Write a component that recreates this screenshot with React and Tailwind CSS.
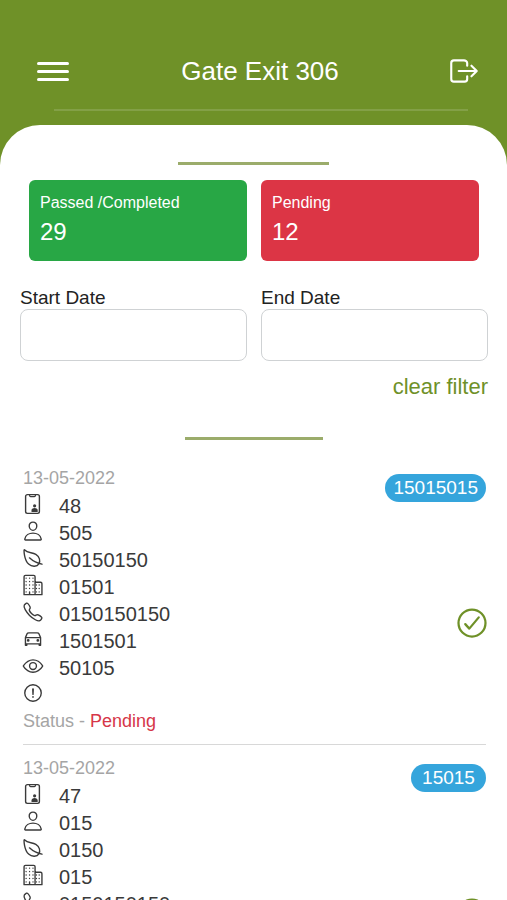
import React from "react";
import {
  IoAlertCircleOutline,
  IoBusinessOutline,
  IoCallOutline,
  IoCarOutline,
  IoCheckmarkCircleOutline,
  IoEyeOutline,
  IoLeafOutline,
  IoLogOutOutline,
  IoPersonOutline,
} from "react-icons/io5";

/* ── Gate passes, newest first ── */
const PASSES = [
  {
    date: "13-05-2022",
    tag: "15015015",
    status: "Pending",
    id: "48",
    person: "505",
    material: "50150150",
    company: "01501",
    phone: "0150150150",
    vehicle: "1501501",
    seenBy: "50105",
    note: "",
  },
  {
    date: "13-05-2022",
    tag: "15015",
    status: "Pending",
    id: "47",
    person: "015",
    material: "0150",
    company: "015",
    phone: "0150150150",
    vehicle: "1501501",
    seenBy: "50105",
    note: "",
  },
];

/* Phone outline with a small solid visitor in the corner */
function PassIcon({ className }) {
  return (
    <svg viewBox="0 0 22 22" className={className} fill="none" stroke="currentColor" aria-hidden="true">
      <rect x="3.6" y="1.6" width="13.8" height="18.8" rx="1.8" strokeWidth="1.4" />
      <path d="M7.6 2v0.6a1 1 0 0 0 1 1h3.8a1 1 0 0 0 1-1V2" strokeWidth="1.2" />
      <circle cx="12.6" cy="12.8" r="1.6" fill="currentColor" stroke="none" />
      <path d="M9.5 18.9v-1.4c0-1.7 1.3-2.6 3.1-2.6s3.1.9 3.1 2.6v1.4z" fill="currentColor" stroke="none" />
    </svg>
  );
}

const FIELDS = [
  { key: "id", Icon: PassIcon },
  { key: "person", Icon: IoPersonOutline },
  { key: "material", Icon: IoLeafOutline },
  { key: "company", Icon: IoBusinessOutline },
  { key: "phone", Icon: IoCallOutline },
  { key: "vehicle", Icon: IoCarOutline },
  { key: "seenBy", Icon: IoEyeOutline },
  { key: "note", Icon: IoAlertCircleOutline },
];

function StatCard({ label, value, className }) {
  return (
    <div className={`rounded-md px-[11px] pt-[11px] pb-3 text-white ${className}`}>
      <div className="text-base leading-6">{label}</div>
      <div className="text-2xl leading-[34px]">{value}</div>
    </div>
  );
}

function DateField({ id, label }) {
  return (
    <div>
      <label htmlFor={id} className="block text-[19px] leading-[22px] text-[#222]">
        {label}
      </label>
      <input
        id={id}
        type="text"
        className="block h-[52px] w-full rounded-lg border border-[#cfd2d4] bg-white px-3 text-lg outline-none"
      />
    </div>
  );
}

function PassItem({ pass }) {
  return (
    <li className="flex justify-between border-b border-[#d8d8d8] pt-[10px] pb-[9px]">
      <div>
        <div className="text-lg leading-[27px] text-[#a5a5a5]">{pass.date}</div>
        {FIELDS.map(({ key, Icon }) => (
          <div key={key} className="flex h-[27px] items-center gap-[15px] text-xl text-[#3a3a3a]">
            <span className="-ml-px pb-1">
              <Icon className="h-[22px] w-[22px]" />
            </span>
            <span>{pass[key]}</span>
          </div>
        ))}
        <div className="text-lg leading-[27px] text-[#a5a5a5]">
          Status - <span className="text-[#d63649]">{pass.status}</span>
        </div>
      </div>

      <div className="flex flex-col items-end pt-[9px]">
        <span className="min-w-[75px] rounded-full bg-[#35a5dc] px-2 text-center text-[19px] leading-7 text-white">
          {pass.tag}
        </span>
        <button type="button" aria-label="Approve" className="-mr-1 mt-[103px] text-[#6f9128]">
          <IoCheckmarkCircleOutline className="h-9 w-9" />
        </button>
      </div>
    </li>
  );
}

export default function App() {
  return (
    <div className="min-h-screen bg-[#6f9128] font-['Liberation_Sans',Arial,sans-serif]">
      {/* ── Header ── */}
      <header className="pt-[47px]">
        <div className="flex h-12 items-center justify-between pr-[26px] pl-[37px]">
          <button type="button" aria-label="Menu" className="flex w-8 flex-col gap-[5px]">
            <span className="h-[3px] rounded-full bg-white" />
            <span className="h-[3px] rounded-full bg-white" />
            <span className="h-[3px] rounded-full bg-white" />
          </button>
          <h1 className="pl-1 text-[26px] leading-9 text-white">Gate Exit 306</h1>
          <button type="button" aria-label="Log out" className="text-white">
            <IoLogOutOutline className="h-[34px] w-[34px]" />
          </button>
        </div>
        <div className="pt-[14px] pr-[39px] pb-[14px] pl-[54px]">
          <div className="h-[2px] bg-[#83a047]" />
        </div>
      </header>

      {/* ── Sheet ── */}
      <main className="rounded-t-[40px] bg-white pt-[37px]">
        <div className="mx-auto h-[3px] w-[151px] bg-[#9bac6b]" />

        <section className="mt-[15px] grid grid-cols-2 gap-[14px] pr-7 pl-[29px]">
          <StatCard label="Passed /Completed" value="29" className="bg-[#28a745]" />
          <StatCard label="Pending" value="12" className="bg-[#dc3545]" />
        </section>

        <section className="mt-[26px] pr-[19px] pl-5">
          <div className="grid grid-cols-2 gap-[14px]">
            <DateField id="start-date" label="Start Date" />
            <DateField id="end-date" label="End Date" />
          </div>
          <div className="mt-3 flex justify-end">
            <button type="button" className="text-[22px] leading-7 text-[#6f9128]">
              clear filter
            </button>
          </div>
        </section>

        <div className="mx-auto mt-9 h-[3px] w-[138px] bg-[#9bac6b]" />

        <ul className="mt-[15px] pr-[21px] pl-[23px]">
          {PASSES.map((pass) => (
            <PassItem key={pass.id} pass={pass} />
          ))}
        </ul>
      </main>
    </div>
  );
}
